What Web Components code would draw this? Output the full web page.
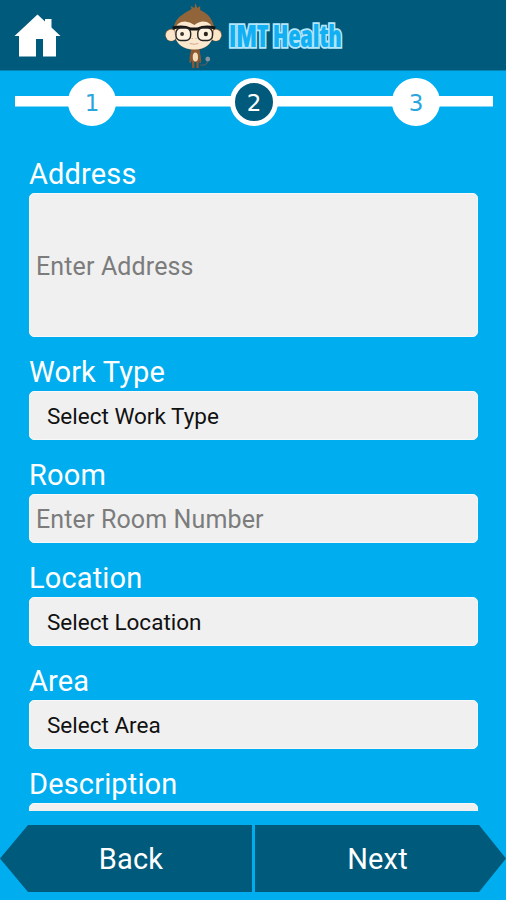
<!DOCTYPE html>
<html lang="en">
<head>
<meta charset="utf-8">
<title>IMT Health</title>
<style>
  body {
    margin: 0;
    font-family: Roboto, "Liberation Sans", sans-serif;
  }
</style>
</head>
<body>
<imt-screen>
  <imt-header slot="header"></imt-header>
  <imt-stepper slot="steps" total="3" current="2"></imt-stepper>
  <imt-field label="Address" kind="area">Enter Address</imt-field>
  <imt-field label="Work Type" kind="select">Select Work Type</imt-field>
  <imt-field label="Room" kind="input">Enter Room Number</imt-field>
  <imt-field label="Location" kind="select">Select Location</imt-field>
  <imt-field label="Area" kind="select">Select Area</imt-field>
  <imt-field label="Description" kind="area"></imt-field>
  <imt-nav-button slot="footer" direction="back">Back</imt-nav-button>
  <imt-nav-button slot="footer" direction="next">Next</imt-nav-button>
</imt-screen>

<script>
/**
 * ImtScreen Web Component
 * Fixed header and footer with the form clipped between them
 */
class ImtScreen extends HTMLElement {
  constructor() {
    super();
    this.attachShadow({ mode: 'open' });
  }

  connectedCallback() {
    this.shadowRoot.innerHTML = `
      <style>
        :host {
          display: flex;
          flex-direction: column;
          box-sizing: border-box;
          height: 900px;
          overflow: hidden;
          background: #00aeef;
          --color-dark: #005a7b;
        }

        main {
          flex: 1;
          min-height: 0;
          overflow: hidden;
          display: flex;
          flex-direction: column;
          gap: 15.3px;
          margin: 28px 27.6px 0 28.5px;
        }

        footer {
          display: flex;
          gap: 3px;
          margin: 14px 0 8px;
        }
      </style>
      <slot name="header"></slot>
      <slot name="steps"></slot>
      <main><slot></slot></main>
      <footer><slot name="footer"></slot></footer>
    `;
  }
}

/**
 * ImtHeader Web Component
 * Home button and the monkey logo
 */
class ImtHeader extends HTMLElement {
  constructor() {
    super();
    this.attachShadow({ mode: 'open' });
  }

  connectedCallback() {
    this.shadowRoot.innerHTML = `
      <style>
        :host {
          display: flex;
          align-items: flex-start;
          height: 71px;
          flex: none;
          background: var(--color-dark);
          border-bottom: 1px solid #0683b0;
          box-sizing: border-box;
        }

        svg {
          display: block;
        }

        .home {
          margin: 14px 0 0 14px;
        }

        .monkey {
          margin-left: 104px;
        }

        .brand {
          margin: 6px 0 0 7px;
          height: 60px;
          line-height: 60px;
          white-space: nowrap;
          font-family: "Open Sans", sans-serif;
          font-size: 30px;
          font-weight: 800;
          font-stretch: 75%;
          letter-spacing: -0.2px;
          transform: scaleX(0.855);
          transform-origin: left;
          color: #12aff3;
          -webkit-text-stroke: 3.6px #b5e7fb;
          paint-order: stroke fill;
        }
      </style>
      ${this.renderHome()}
      ${this.renderMonkey()}
      <div class="brand">IMT Health</div>
    `;
  }

  renderHome() {
    return `
      <svg class="home" width="47" height="44" viewBox="0 0 47 44">
        <path fill="#fff" d="M23.5 .5 31 7.500V5h6.500v8.500L46.500 22H42v20.500H29V25h-7v17.500H5V22H.5Z"/>
      </svg>
    `;
  }

  renderMonkey() {
    return `
      <svg class="monkey" width="57" height="69" viewBox="0 0 60 69" preserveAspectRatio="none">
        <!-- body, arms and tail -->
        <path d="M28 51Q26 57 26.500 63M35 51Q38 57 37 63" fill="none" stroke="#865b35" stroke-width="1.500"/>
        <path d="M37 65Q45 66 45 60" fill="none" stroke="#4f5d61" stroke-width="1.200"/>
        <circle cx="45" cy="59" r="2.500" fill="#87939a"/>
        <path d="M27.500 49h9l1 11-2 2v6h-2.500v-6h-2v6h-2.500v-6l-2-2Z" fill="#8a5932"/>
        <ellipse cx="32" cy="57" rx="2.800" ry="4.500" fill="#f3dcb9"/>
        <!-- ears -->
        <circle cx="6.500" cy="35" r="6.300" fill="#8d623c"/>
        <circle cx="53.500" cy="35" r="6.300" fill="#8d623c"/>
        <circle cx="6.500" cy="35.300" r="5.700" fill="#fbe4c8"/>
        <circle cx="53.500" cy="35.300" r="5.700" fill="#fbe4c8"/>
        <!-- head -->
        <path d="M10 32Q8 23 15 17Q20 13 28 9L27 6 31 8 32 3 34 8 37 6 37 10Q46 14 49 20Q53 26 51 34Q49 49 31 50Q11 49 10 32Z" fill="#92643a"/>
        <path d="M10 35Q9 25 17 22Q24 20 31 25Q37 20 44 22Q52 25 51 35Q48 49 31 49.500Q13 49 10 35Z" fill="#fce8cf"/>
        <!-- glasses -->
        <path d="M8 28Q19 25.500 27 29H34Q42 25.500 53 28" fill="none" stroke="#151515" stroke-width="3"/>
        <rect x="11.500" y="28" width="15.500" height="12.500" rx="5" fill="#fff3df" stroke="#252525" stroke-width="1.500"/>
        <rect x="34.500" y="28" width="15.500" height="12.500" rx="5" fill="#fff3df" stroke="#252525" stroke-width="1.500"/>
        <circle cx="18" cy="34" r="2" fill="#39332d"/>
        <circle cx="43" cy="34" r="2.200" fill="#2a2521"/>
        <path d="M28 38.500h1.500M32 38.500h1M26 43.500Q31 45 35 43.500" fill="none" stroke="#cfa78c" stroke-width="1"/>
      </svg>
    `;
  }
}

/**
 * ImtStepper Web Component
 * Numbered steps on a horizontal track
 */
class ImtStepper extends HTMLElement {
  constructor() {
    super();
    this.attachShadow({ mode: 'open' });
  }

  connectedCallback() {
    const total = Number(this.getAttribute('total'));
    const current = Number(this.getAttribute('current'));
    const steps = Array.from({ length: total }, (_, i) => i + 1)
      .map((n) => `<span class="step ${n === current ? 'current' : ''}">${n}</span>`)
      .join('');

    this.shadowRoot.innerHTML = `
      <style>
        :host {
          display: flex;
          flex: none;
          justify-content: space-between;
          box-sizing: border-box;
          height: 48px;
          margin: 7.4px 13px 0 15px;
          padding: 0 53px;
          background: linear-gradient(#fff, #fff) 0 18px / 100% 10.5px no-repeat;
        }

        .step {
          display: flex;
          align-items: center;
          justify-content: center;
          box-sizing: border-box;
          width: 48px;
          height: 48px;
          padding-top: 1px;
          border: 5px solid #fff;
          border-radius: 50%;
          background: #fff;
          color: #2ba6dc;
          font: 23px "DejaVu Sans", sans-serif;
        }

        .current {
          background: var(--color-dark);
          color: #fff;
        }
      </style>
      ${steps}
    `;
  }
}

/**
 * ImtField Web Component
 * Label above an input, select or text area box
 */
class ImtField extends HTMLElement {
  constructor() {
    super();
    this.attachShadow({ mode: 'open' });
  }

  connectedCallback() {
    const kind = this.getAttribute('kind');

    this.shadowRoot.innerHTML = `
      <style>
        :host {
          display: block;
          flex: none;
        }

        .label {
          height: 38.8px;
          padding-left: 0.5px;
          line-height: 40px;
          font-size: 29px;
          letter-spacing: 0.15px;
          color: #fff;
          white-space: nowrap;
        }

        .box {
          display: flex;
          align-items: center;
          box-sizing: border-box;
          height: 48.9px;
          padding: 2px 6.5px 0;
          border: 1px solid #f8f8f8;
          border-radius: 5px;
          background: #f0f0f0;
          font-size: 25px;
          letter-spacing: 0.13px;
          color: #7c7c7c;
          white-space: nowrap;
        }

        .area {
          height: 143.5px;
          padding-top: 4px;
        }

        .select {
          padding-left: 17.5px;
          font-size: 22.5px;
          letter-spacing: 0;
          color: #111;
        }
      </style>
      <div class="label">${this.getAttribute('label')}</div>
      <div class="box ${kind}"><slot></slot></div>
    `;
  }
}

/**
 * ImtNavButton Web Component
 * Footer button with an arrow-shaped outer edge
 */
class ImtNavButton extends HTMLElement {
  constructor() {
    super();
    this.attachShadow({ mode: 'open' });
  }

  connectedCallback() {
    this.shadowRoot.innerHTML = `
      <style>
        :host {
          display: flex;
          flex: 1;
          align-items: center;
          justify-content: center;
          box-sizing: border-box;
          height: 67px;
          background: var(--color-dark);
          color: #fff;
          font-size: 29px;
          letter-spacing: 0.2px;
        }

        :host([direction="back"]) {
          flex: 0 0 252px;
          padding-left: 10px;
          clip-path: polygon(28px 0, 100% 0, 100% 100%, 28px 100%, 0 50%);
        }

        :host([direction="next"]) {
          padding-right: 6px;
          clip-path: polygon(0 0, calc(100% - 27px) 0, 100% 50%, calc(100% - 27px) 100%, 0 100%);
        }
      </style>
      <slot></slot>
    `;
  }
}

customElements.define('imt-screen', ImtScreen);
customElements.define('imt-header', ImtHeader);
customElements.define('imt-stepper', ImtStepper);
customElements.define('imt-field', ImtField);
customElements.define('imt-nav-button', ImtNavButton);
</script>
</body>
</html>
